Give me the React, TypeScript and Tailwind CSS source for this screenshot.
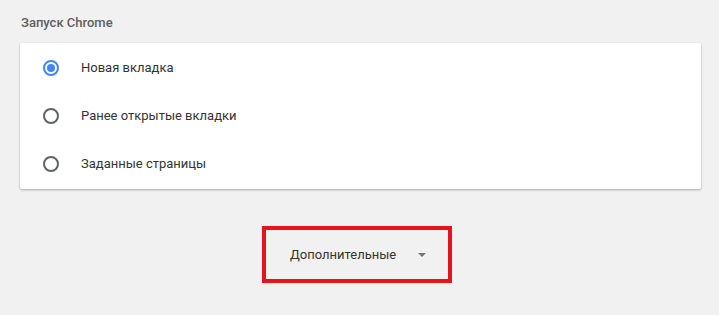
import { useState } from 'react';

const options = ['Новая вкладка', 'Ранее открытые вкладки', 'Заданные страницы'];

function Radio({ checked }: { checked: boolean }) {
  return (
    <span
      className={
        checked
          ? 'flex h-[16px] w-[16px] items-center justify-center rounded-full border-2 border-[#4285f4]'
          : 'flex h-[16px] w-[16px] items-center justify-center rounded-full border-2 border-[#5f6368]'
      }
    >
      {checked && <span className="h-[8px] w-[8px] rounded-full bg-[#4285f4]" />}
    </span>
  );
}

export default function App() {
  const [selected, setSelected] = useState(0);

  return (
    <div
      className="h-[315px] w-[719px] overflow-hidden bg-[#f1f1f1] text-[13px] text-[#333]"
      style={{ fontFamily: 'Roboto, "Noto Sans", sans-serif' }}
    >
      {/* Section title */}
      <div className="ml-[21px] flex h-[43px] items-center pt-[3px] font-medium text-[#5f5f5f]">
        Запуск Chrome
      </div>

      {/* Startup options card */}
      <div className="ml-[20px] w-[681px] rounded-[2px] bg-white pt-[1px] pb-[1px] shadow-[0_1px_2px_rgba(0,0,0,0.2),0_1px_3px_rgba(0,0,0,0.12)]">
        {options.map((label, i) => (
          <div
            key={label}
            onClick={() => setSelected(i)}
            className="flex h-[48px] cursor-pointer items-center"
          >
            <div className="ml-[23px] w-[38px]">
              <Radio checked={selected === i} />
            </div>
            <span>{label}</span>
          </div>
        ))}
      </div>

      {/* Advanced button */}
      <div className="mt-[37px] ml-[262px] flex h-[57px] w-[190px] items-center border-4 border-[#e3141c]">
        <span className="ml-[24px]">Дополнительные</span>
        <svg className="ml-[22px]" width="8" height="4" viewBox="0 0 8 4">
          <path d="M0 0 L8 0 L4 4 Z" fill="#757575" />
        </svg>
      </div>
    </div>
  );
}
